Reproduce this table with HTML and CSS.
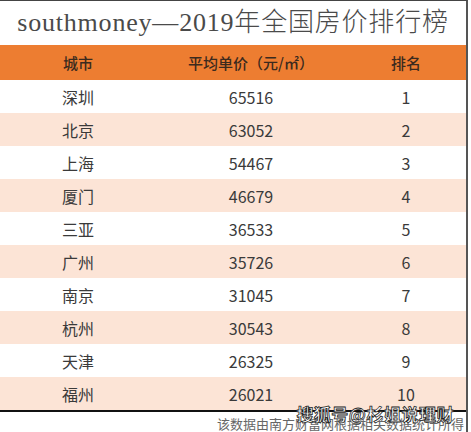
FILE: index.html
```html
<!DOCTYPE html>
<html lang="zh-CN">
<head>
    <meta charset="UTF-8">
    <meta name="viewport" content="width=device-width, initial-scale=1.0">
    <title>southmoney—2019年全国房价排行榜</title>
    <link rel="stylesheet" href="styles.css">
</head>
<body>
    <div class="sheet">
        <h1 class="title">southmoney—2019年全国房价排行榜</h1>
        <table>
            <thead>
                <tr>
                    <th class="col-city">城市</th>
                    <th class="col-price">平均单价（元/㎡）</th>
                    <th class="col-rank">排名</th>
                </tr>
            </thead>
            <tbody>
                <tr><td>深圳</td><td>65516</td><td>1</td></tr>
                <tr><td>北京</td><td>63052</td><td>2</td></tr>
                <tr><td>上海</td><td>54467</td><td>3</td></tr>
                <tr><td>厦门</td><td>46679</td><td>4</td></tr>
                <tr><td>三亚</td><td>36533</td><td>5</td></tr>
                <tr><td>广州</td><td>35726</td><td>6</td></tr>
                <tr><td>南京</td><td>31045</td><td>7</td></tr>
                <tr><td>杭州</td><td>30543</td><td>8</td></tr>
                <tr><td>天津</td><td>26325</td><td>9</td></tr>
                <tr><td>福州</td><td>26021</td><td>10</td></tr>
            </tbody>
        </table>
        <div class="source">
            该数据由南方财富网根据相关数据统计所得
            <span class="watermark">搜狐号@杉姐说理财</span>
        </div>
    </div>
</body>
</html>
```

FILE: styles.css
```css
body {
    margin: 0;
    background-color: #fff;
    font-family: 'Noto Sans CJK SC', sans-serif;
    color: #333;
}

.sheet {
    width: 468px;
    height: 432px;
    border-top: 1px solid #444;
    border-right: 2px solid #555;
    box-sizing: border-box;
    position: relative;
}

.title {
    margin: 0;
    height: 44px;
    line-height: 44px;
    text-align: center;
    font-family: 'Liberation Serif', 'Noto Sans CJK SC', serif;
    font-weight: 300;
    font-size: 26px;
    letter-spacing: 0.8px;
    color: #4a4a4a;
}

table {
    width: 100%;
    border-collapse: collapse;
    border-bottom: 2px solid #111;
}

th, td {
    padding: 0;
    text-align: center;
    font-size: 16px;
}

th {
    height: 35px;
    background-color: #ed7d31;
    color: #3b2a1e;
    font-weight: 500;
    font-size: 15px;
}

td {
    height: 33px;
    color: #3a3a3a;
}

.col-city {
    width: 156px;
}

.col-price {
    width: 190px;
}

tbody tr:nth-child(even) td {
    background-color: #fce4d6;
}

.source {
    position: relative;
    text-align: right;
    font-size: 13px;
    color: #666;
    padding-top: 3px;
    padding-right: 2px;
    line-height: 18px;
}

/* 水印 */
.watermark {
    position: absolute;
    right: 12px;
    top: -7px;
    line-height: 18px;
    font-size: 17px;
    font-weight: bold;
    color: #fff;
    -webkit-text-stroke: 0.8px #222;
    letter-spacing: 0.5px;
}
```
